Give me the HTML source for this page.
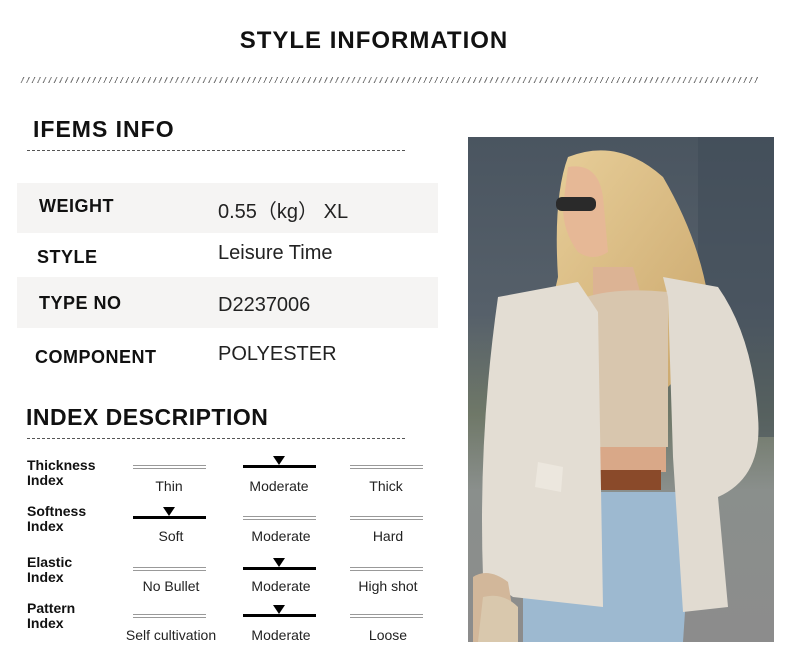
<!DOCTYPE html>
<html><head><meta charset="utf-8"><style>
body{margin:0;width:790px;height:664px;background:#fff;font-family:"Liberation Sans",sans-serif;position:relative;overflow:hidden;color:#111}
.a{position:absolute;white-space:nowrap}
.t{font-weight:bold}
.row{position:absolute;left:17px;width:421px;background:#f5f4f3}
.lb{font-size:18px;font-weight:bold;letter-spacing:0.5px}
.v{font-size:20px;color:#222}
.dash{position:absolute;border-top:1px dashed #555;height:0}
.thin{position:absolute;width:73px;height:2px;border:1px solid #999;border-left:none;border-right:none;background:#fff}
.bold{position:absolute;width:73px;height:3px;background:#000}
.tri{position:absolute;width:0;height:0;border-left:6px solid transparent;border-right:6px solid transparent;border-top:9px solid #000}
.il{font-size:14px;font-weight:bold;line-height:15px}
.iv{font-size:14px;width:110px;text-align:center;color:#222}
</style></head><body>
<div class="a t" style="left:0;width:748px;text-align:center;top:27px;font-size:24px;letter-spacing:1px">STYLE INFORMATION</div>
<div class="a" style="left:20px;top:77px;width:740px;height:6px;background:repeating-linear-gradient(115deg,transparent 0 3px,#555 3px 4px,transparent 4px 5px);opacity:.8"></div>
<div class="a t" style="left:33px;top:116px;font-size:23px;letter-spacing:1px">IFEMS INFO</div>
<div class="dash" style="left:27px;top:150px;width:378px"></div>
<div class="row" style="top:183px;height:50px"></div>
<div class="row" style="top:277px;height:51px"></div>
<div class="a lb" style="left:39px;top:196px">WEIGHT</div>
<div class="a v" style="left:218px;top:195px">0.55（kg） XL</div>
<div class="a lb" style="left:37px;top:247px">STYLE</div>
<div class="a v" style="left:218px;top:242px">Leisure Time</div>
<div class="a lb" style="left:39px;top:293px">TYPE NO</div>
<div class="a v" style="left:218px;top:294px">D2237006</div>
<div class="a lb" style="left:35px;top:347px">COMPONENT</div>
<div class="a v" style="left:218px;top:343px">POLYESTER</div>
<div class="a t" style="left:26px;top:404px;font-size:23px;letter-spacing:.5px">INDEX DESCRIPTION</div>
<div class="dash" style="left:27px;top:438px;width:378px"></div>

<div class="a il" style="left:27px;top:458px">Thickness<br>Index</div>
<div class="thin" style="left:133px;top:465px"></div>
<div class="bold" style="left:243px;top:465px"></div><div class="tri" style="left:273px;top:456px"></div>
<div class="thin" style="left:350px;top:465px"></div>
<div class="a iv" style="left:114px;top:478px">Thin</div>
<div class="a iv" style="left:224px;top:478px">Moderate</div>
<div class="a iv" style="left:331px;top:478px">Thick</div>

<div class="a il" style="left:27px;top:504px">Softness<br>Index</div>
<div class="bold" style="left:133px;top:516px"></div><div class="tri" style="left:163px;top:507px"></div>
<div class="thin" style="left:243px;top:516px"></div>
<div class="thin" style="left:350px;top:516px"></div>
<div class="a iv" style="left:116px;top:528px">Soft</div>
<div class="a iv" style="left:226px;top:528px">Moderate</div>
<div class="a iv" style="left:333px;top:528px">Hard</div>

<div class="a il" style="left:27px;top:555px">Elastic<br>Index</div>
<div class="thin" style="left:133px;top:567px"></div>
<div class="bold" style="left:243px;top:567px"></div><div class="tri" style="left:273px;top:558px"></div>
<div class="thin" style="left:350px;top:567px"></div>
<div class="a iv" style="left:116px;top:578px">No Bullet</div>
<div class="a iv" style="left:226px;top:578px">Moderate</div>
<div class="a iv" style="left:333px;top:578px">High shot</div>

<div class="a il" style="left:27px;top:601px">Pattern<br>Index</div>
<div class="thin" style="left:133px;top:614px"></div>
<div class="bold" style="left:243px;top:614px"></div><div class="tri" style="left:273px;top:605px"></div>
<div class="thin" style="left:350px;top:614px"></div>
<div class="a iv" style="left:116px;top:627px">Self cultivation</div>
<div class="a iv" style="left:226px;top:627px">Moderate</div>
<div class="a iv" style="left:333px;top:627px">Loose</div>

<svg class="a" style="left:468px;top:137px" width="306" height="505" viewBox="0 0 306 505">
<defs>
<linearGradient id="bg" x1="0" y1="0" x2="0" y2="1">
<stop offset="0" stop-color="#4a5560"/><stop offset=".35" stop-color="#56606a"/><stop offset=".55" stop-color="#6f7868"/><stop offset=".7" stop-color="#8a8f8c"/><stop offset="1" stop-color="#8c8c8c"/></linearGradient>
<linearGradient id="hair" x1="0" y1="0" x2="1" y2="1"><stop offset="0" stop-color="#e8cf9a"/><stop offset="1" stop-color="#c9a56a"/></linearGradient>
</defs>
<rect width="306" height="505" fill="url(#bg)"/>
<rect x="230" y="0" width="76" height="300" fill="#3e4a55" opacity=".5"/>
<path d="M100 20 Q150 0 195 40 Q230 100 240 160 L250 200 Q220 230 200 250 L170 230 L120 240 Q90 250 75 240 Q80 180 90 140 Q85 60 100 20Z" fill="url(#hair)"/>
<path d="M100 30 Q130 25 135 60 L140 115 Q125 125 110 115 Q95 95 95 70Z" fill="#e6b896"/>
<rect x="88" y="60" width="40" height="14" rx="6" fill="#2a2a2a"/>
<path d="M125 130 L165 130 L175 165 L125 170Z" fill="#dcb394"/>
<path d="M118 160 Q150 150 200 155 L200 310 L125 310Z" fill="#d8c6ae"/>
<rect x="128" y="310" width="70" height="25" fill="#d9a888"/>
<rect x="128" y="333" width="65" height="20" fill="#8a4a2a"/>
<path d="M55 355 L225 355 L215 505 L55 505Z" fill="#9db9d0"/>
<path d="M30 160 L110 145 L130 175 L135 470 L45 460 L15 440 Q10 300 30 160Z" fill="#e3ddd3"/>
<path d="M195 140 L250 150 Q285 200 290 280 Q295 340 250 360 L260 470 L215 475 L205 320 L200 160Z" fill="#e1dbd1"/>
<path d="M70 325 L95 330 L93 355 L67 350Z" fill="#ece7de"/>
<path d="M5 440 Q20 430 40 445 L50 505 L5 505Z" fill="#d2b79a"/>
<path d="M15 460 Q35 455 50 470 L50 505 L10 505Z" fill="#d9c8ad"/>
</svg>
</body></html>
